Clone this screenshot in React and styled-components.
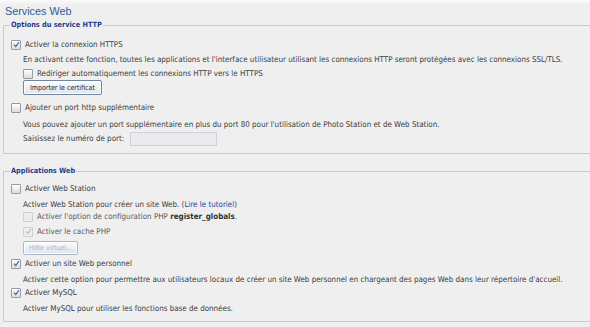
import styled, { createGlobalStyle } from "styled-components";

const GlobalStyle = createGlobalStyle`
  body {
    margin: 0;
    background: #efefef;
    font-family: "DejaVu Sans Condensed", "DejaVu Sans", sans-serif;
    font-size: 7.95px;
    color: #3c3c3c;
  }
`;

const Page = styled.div`
  width: 590px;
  height: 327px;
  overflow: hidden;
  padding: 0 0 0 3px;
  box-sizing: border-box;
  background: linear-gradient(#fbfbfb 0px, #efefef 5px);
`;

const Title = styled.div`
  height: 20px;
  line-height: 22px;
  padding-left: 2px;
  font-family: "Liberation Sans", sans-serif;
  font-size: 10.8px;
  color: #2b5c99;
`;

const Fieldset = styled.fieldset`
  margin: ${(p) => p.$top || 0}px -4px 0 0;
  padding: 0 0 0 7px;
  border: 1px solid #c9c9d2;
  height: ${(p) => p.$height}px;
  box-sizing: border-box;
`;

const Legend = styled.legend`
  padding: 0 1px;
  margin-left: -1px;
  font-weight: bold;
  font-size: 7.3px;
  color: #1b3d8c;
  line-height: 10px;
`;

const Row = styled.div`
  display: flex;
  align-items: center;
  gap: 3px;
  height: ${(p) => p.$h || 13}px;
  margin-top: ${(p) => p.$mt || 0}px;
  margin-left: ${(p) => (p.$sub ? 12 : 0)}px;
  color: ${(p) => (p.$muted ? "#5a5a5a" : "inherit")};
  white-space: nowrap;
`;

const Label = styled.span`
  white-space: nowrap;
`;

const Box = styled.span`
  width: 8px;
  height: 8px;
  flex: none;
  border: 1px solid ${(p) => (p.$disabled ? "#cfcfd4" : "#9a9aa2")};
  background: ${(p) => (p.$disabled ? "#ececec" : "linear-gradient(#ffffff, #dcdce2)")};
  border-radius: 1px;
  display: flex;
  align-items: center;
  justify-content: center;
  margin-right: 1px;
`;

const Desc = styled.div`
  margin: ${(p) => p.$mt || 0}px 0 0 12px;
  height: 13px;
  line-height: 13px;
  white-space: nowrap;
`;

const Link = styled.a`
  color: #1a3fa5;
  text-decoration: none;
`;

const Strong = styled.b`
  color: #333;
`;

const Button = styled.button`
  margin: ${(p) => p.$mt || 0}px 0 0 12px;
  height: ${(p) => p.$h || 15}px;
  padding: 0 ${(p) => p.$px || 6}px;
  border: 1px solid ${(p) => (p.disabled ? "#a9b5c8" : "#72859f")};
  border-radius: 2px;
  background: linear-gradient(#fdfdff, #dfe3ec);
  font-family: "DejaVu Sans Condensed", "DejaVu Sans", sans-serif;
  font-size: 7px;
  color: ${(p) => (p.disabled ? "#aab2c2" : "#222")};
  display: block;
  box-shadow: inset 0 0 0 1px #ffffff;
`;

const Input = styled.input`
  width: 87px;
  height: 14px;
  box-sizing: border-box;
  border: 1px solid #cdd3dc;
  background: #ebebef;
  margin-left: 3px;
`;

const Check = ({ checked, disabled }) => (
  <Box $disabled={disabled}>
    {checked && (
      <svg width="7" height="7" viewBox="0 0 7 7">
        <path
          d="M1 3.6 L2.8 5.6 L6 1"
          fill="none"
          stroke={disabled ? "#c0c0c8" : "#3a5f9e"}
          strokeWidth="1.2"
        />
      </svg>
    )}
  </Box>
);

export default function App() {
  return (
    <>
      <GlobalStyle />
      <Page>
        <Title>Services Web</Title>
        <Fieldset $top={0} $height={134}>
          <Legend>Options du service HTTP</Legend>
          <Row $mt={8}>
            <Check checked />
            <Label>Activer la connexion HTTPS</Label>
          </Row>
          <Desc $mt={2}>
            En activant cette fonction, toutes les applications et l'interface utilisateur utilisant les connexions HTTP seront protégées avec les connexions SSL/TLS.
          </Desc>
          <Row $sub $mt={1}>
            <Check />
            <Label>Rediriger automatiquement les connexions HTTP vers le HTTPS</Label>
          </Row>
          <Button $mt={0}>Importer le certificat</Button>
          <Row $mt={6}>
            <Check />
            <Label>Ajouter un port http supplémentaire</Label>
          </Row>
          <Desc $mt={4}>
            Vous pouvez ajouter un port supplémentaire en plus du port 80 pour l'utilisation de Photo Station et de Web Station.
          </Desc>
          <Row $sub $mt={0} $h={15}>
            <Label>Saisissez le numéro de port:</Label>
            <Input />
          </Row>
        </Fieldset>
        <Fieldset $top={12} $height={156}>
          <Legend>Applications Web</Legend>
          <Row $mt={6}>
            <Check />
            <Label>Activer Web Station</Label>
          </Row>
          <Desc $mt={3}>
            Activer Web Station pour créer un site Web. (<Link>Lire le tutoriel</Link>)
          </Desc>
          <Row $sub $muted $mt={-1}>
            <Check disabled />
            <Label>
              Activer l'option de configuration PHP <Strong>register_globals</Strong>.
            </Label>
          </Row>
          <Row $sub $muted $mt={2}>
            <Check checked disabled />
            <Label>Activer le cache PHP</Label>
          </Row>
          <Button disabled $mt={3} $h={14} $px={5}>
            Hôte virtuel...
          </Button>
          <Row $mt={2}>
            <Check checked />
            <Label>Activer un site Web personnel</Label>
          </Row>
          <Desc $mt={3}>
            Activer cette option pour permettre aux utilisateurs locaux de créer un site Web personnel en chargeant des pages Web dans leur répertoire d'accueil.
          </Desc>
          <Row>
            <Check checked />
            <Label>Activer MySQL</Label>
          </Row>
          <Desc $mt={3}>
            Activer MySQL pour utiliser les fonctions base de données.
          </Desc>
        </Fieldset>
      </Page>
    </>
  );
}
